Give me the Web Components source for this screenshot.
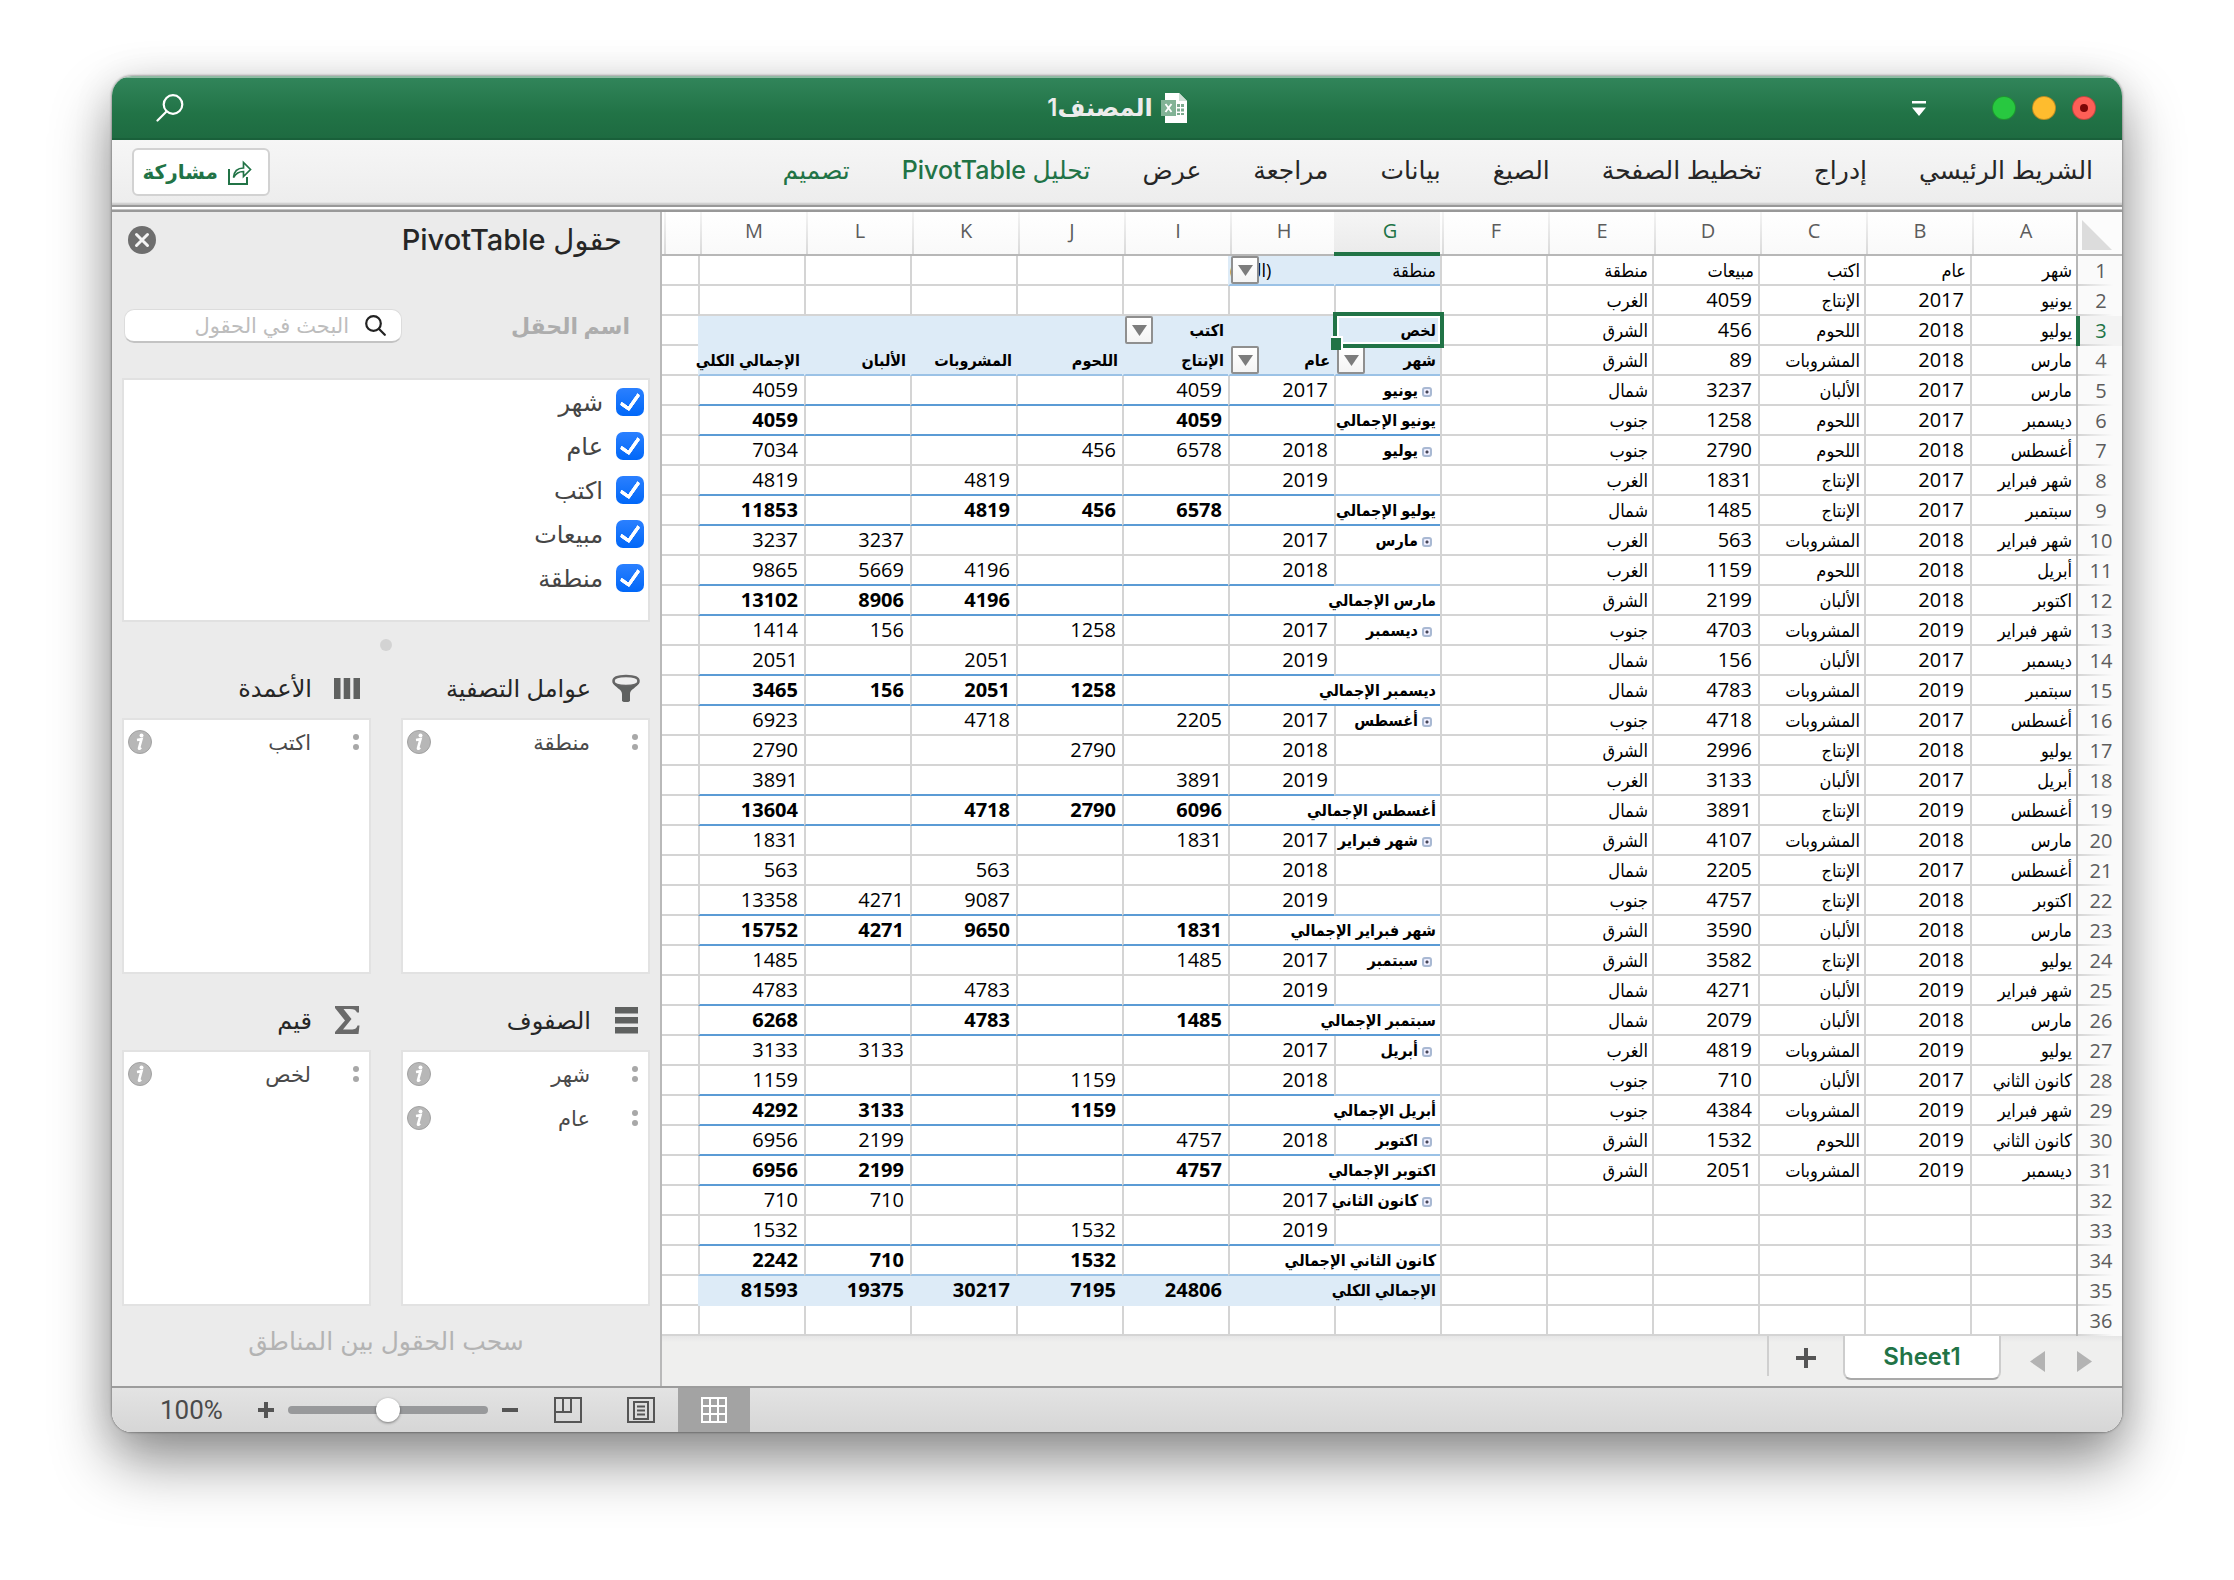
<!DOCTYPE html>
<html lang="ar" dir="rtl">
<head>
<meta charset="utf-8">
<title>المصنف1</title>
<style>
html{background:#fff}
body{margin:0;padding:76px 112px 148px;font-family:"Inter","DejaVu Sans",sans-serif;color:#262626;background:#fff}
</style>
</head>
<body>
<workbook-window>
  <title-bar slot="title">المصنف1</title-bar>
  <ribbon-bar slot="ribbon"></ribbon-bar>
  <sheet-grid slot="main"></sheet-grid>
  <sheet-tabs slot="main">Sheet1</sheet-tabs>
  <pivot-panel slot="side">
    <field-area slot="areas" icon="filter" label="عوامل التصفية" items="منطقة"></field-area>
    <field-area slot="areas" icon="columns" label="الأعمدة" items="اكتب"></field-area>
    <field-area slot="areas" icon="rows" label="الصفوف" items="شهر,عام"></field-area>
    <field-area slot="areas" icon="sigma" label="قيم" items="لخص"></field-area>
  </pivot-panel>
  <status-bar slot="status"></status-bar>
</workbook-window>
<script>
const define = (name, render) => customElements.define(name, class extends HTMLElement {
  connectedCallback() {
    if (this.shadowRoot) return;
    this.attachShadow({mode: 'open'}).innerHTML =
      '<style>:host,*{box-sizing:border-box}button{font:inherit;color:inherit;border:0;background:none;padding:0;margin:0}svg{display:block}</style>' + render(this);
  }
});

define('workbook-window', () => `
<style>
:host{display:block;border-radius:20px;box-shadow:0 0 2px 1px rgba(0,0,0,.28),0 30px 60px rgba(0,0,0,.42),0 6px 40px rgba(0,0,0,.12)}
.frame{border-radius:20px;overflow:hidden;background:#ebebeb}
.body{display:flex;align-items:stretch}
.main{flex:1;min-width:0}
.side{flex:0 0 550px;display:flex}
</style>
<div class="frame">
  <slot name="title"></slot><slot name="ribbon"></slot>
  <div class="body"><main class="main"><slot name="main"></slot></main><div class="side"><slot name="side"></slot></div></div>
  <slot name="status"></slot>
</div>`);

define('title-bar', () => `
<style>
:host{display:grid;grid-template-columns:1fr auto 1fr;align-items:center;height:64px;padding:0 26px;color:#ececec;
 background:linear-gradient(#31855a,#217346 60%,#1e6b41);border-top:2px solid #8fbba3;border-bottom:2px solid #19603a;font-size:24px;font-weight:600}
.lights{display:flex;gap:16px;align-items:center}
.l{width:24px;height:24px;border-radius:50%;border:1px solid rgba(0,0,0,.25);display:grid;place-items:center}
.r{background:#fe5f57}.y{background:#febc2e}.g{background:#28c840}
.r i{width:8px;height:8px;border-radius:50%;background:#7d0607}
.menu{margin-right:50px}
.name{display:flex;align-items:center;gap:8px;line-height:36px}
.find{justify-self:end;margin-left:18px}
</style>
<div class="lights"><button class="l r" aria-label="إغلاق"><i></i></button><button class="l y" aria-label="تصغير"></button><button class="l g" aria-label="تكبير"></button>
<button class="menu" aria-label="تخصيص"><svg width="14" height="15" viewBox="0 0 14 15" fill="#fff"><path d="M0 0h14v2.5H0zM0 6.5h14L7 15z"/></svg></button></div>
<div class="name"><svg width="26" height="30" viewBox="0 0 26 30"><path d="M4 0h14l8 8v22H4z" fill="#fff"/><path d="M18 0l8 8h-8z" fill="#cfe0d6"/><path d="M16 11h7v3h-7zM16 15.500h7v3h-7zM16 20h7v2h-7z" fill="#7dab90"/><path d="M19.500 10v13" stroke="#fff"/><path d="M0 7h15v16H0z" fill="#82b396"/><path d="M4.500 11l6 8M10.500 11l-6 8" stroke="#fff" stroke-width="1.800"/></svg><span><slot></slot></span></div>
<button class="find" aria-label="بحث"><svg width="28" height="28" viewBox="0 0 28 28" fill="none" stroke="#fff" stroke-width="2.200" stroke-linecap="round"><circle cx="17" cy="10.500" r="9.300"/><path d="M10.500 17.500L1.500 26.500"/></svg></button>`);

define('ribbon-bar', () => `
<style>
:host{display:flex;align-items:center;height:72px;padding:0 29px 8px 20px;background:linear-gradient(#f6f6f6,#ededed 62px,#c9c9c9 64px,#c9c9c9 65px,#999 65px,#999 67px,#fff 67px,#fff 69px,#c4c4c4 69px,#c4c4c4 70px,#999 70px,#999 72px)}
nav{display:flex;gap:52px;flex:1;font-size:25px;font-weight:500;line-height:36px;padding-bottom:4px}
a{color:#262626;text-decoration:none;white-space:nowrap}
a.on{color:#217346}
.share{display:flex;align-items:center;gap:10px;height:48px;width:138px;padding:0 16px 0 0;border:2px solid #d2d2d2;border-radius:6px;background:#fff;color:#217346;font-size:20px;font-weight:600}
</style>
<nav>${['الشريط الرئيسي','إدراج','تخطيط الصفحة','الصيغ','بيانات','مراجعة','عرض'].map(t=>`<a href="#">${t}</a>`).join('')}<a href="#" class="on">تحليل PivotTable</a><a href="#" class="on">تصميم</a></nav>
<button class="share"><svg width="24" height="25" viewBox="0 0 24 25" fill="none" stroke="#217346" stroke-width="2"><path d="M1 9v15h18v-7"/><path d="M5.500 17.500C6 11 10 8 15.500 8V2.500L22.500 9.500 15.500 16.500V11.500C11.500 11.500 8 13 5.500 17.500z" stroke-width="1.700"/></svg><span>مشاركة</span></button>`);

const SOURCE = `شهر|عام|اكتب|مبيعات|منطقة
يونيو|2017|الإنتاج|4059|الغرب
يوليو|2018|اللحوم|456|الشرق
مارس|2018|المشروبات|89|الشرق
مارس|2017|الألبان|3237|شمال
ديسمبر|2017|اللحوم|1258|جنوب
أغسطس|2018|اللحوم|2790|جنوب
شهر فبراير|2017|الإنتاج|1831|الغرب
سبتمبر|2017|الإنتاج|1485|شمال
شهر فبراير|2018|المشروبات|563|الغرب
أبريل|2018|اللحوم|1159|الغرب
اكتوبر|2018|الألبان|2199|الشرق
شهر فبراير|2019|المشروبات|4703|جنوب
ديسمبر|2017|الألبان|156|شمال
سبتمبر|2019|المشروبات|4783|شمال
أغسطس|2017|المشروبات|4718|جنوب
يوليو|2018|الإنتاج|2996|الشرق
أبريل|2017|الألبان|3133|الغرب
أغسطس|2019|الإنتاج|3891|شمال
مارس|2018|المشروبات|4107|الشرق
أغسطس|2017|الإنتاج|2205|شمال
اكتوبر|2018|الإنتاج|4757|جنوب
مارس|2018|الألبان|3590|الشرق
يوليو|2018|الإنتاج|3582|الشرق
شهر فبراير|2019|الألبان|4271|شمال
مارس|2018|الألبان|2079|شمال
يوليو|2019|المشروبات|4819|الغرب
كانون الثاني|2017|الألبان|710|جنوب
شهر فبراير|2019|المشروبات|4384|جنوب
كانون الثاني|2019|اللحوم|1532|الشرق
ديسمبر|2019|المشروبات|2051|الشرق`.split('\n').map(r => r.split('|'));

/* kind | G | H | I | J | K | L | M ; kinds: p page filter, h/k header rows, i group item, d detail, t subtotal, g grand total */
const PIVOT = `p|منطقة|(الكل)|||||
n|||||||
h|لخص||اكتب||||
k|شهر|عام|الإنتاج|اللحوم|المشروبات|الألبان|الإجمالي الكلي
i|يونيو|2017|4059||||4059
t|يونيو الإجمالي||4059||||4059
i|يوليو|2018|6578|456|||7034
d||2019|||4819||4819
t|يوليو الإجمالي||6578|456|4819||11853
i|مارس|2017||||3237|3237
d||2018|||4196|5669|9865
t|مارس الإجمالي||||4196|8906|13102
i|ديسمبر|2017||1258||156|1414
d||2019|||2051||2051
t|ديسمبر الإجمالي|||1258|2051|156|3465
i|أغسطس|2017|2205||4718||6923
d||2018||2790|||2790
d||2019|3891||||3891
t|أغسطس الإجمالي||6096|2790|4718||13604
i|شهر فبراير|2017|1831||||1831
d||2018|||563||563
d||2019|||9087|4271|13358
t|شهر فبراير الإجمالي||1831||9650|4271|15752
i|سبتمبر|2017|1485||||1485
d||2019|||4783||4783
t|سبتمبر الإجمالي||1485||4783||6268
i|أبريل|2017||||3133|3133
d||2018||1159|||1159
t|أبريل الإجمالي|||1159||3133|4292
i|اكتوبر|2018|4757|||2199|6956
t|اكتوبر الإجمالي||4757|||2199|6956
i|كانون الثاني|2017||||710|710
d||2019||1532|||1532
t|كانون الثاني الإجمالي|||1532||710|2242
g|الإجمالي الكلي||24806|7195|30217|19375|81593
n|||||||`.split('\n').map(r => r.split('|'));

const arrow = '<button class="dd" aria-label="تصفية"><svg width="15" height="11" viewBox="0 0 15 11"><path d="M0 0h15L7.500 11z" fill="#7c7c7c"/></svg></button>';

function gridRow(n) {
  const src = SOURCE[n - 1] || [], p = PIVOT[n - 1], kind = p[0];
  const next = PIVOT[n] ? PIVOT[n][0] : 'n';
  let h = `<tr${n === 3 ? ' class="cur"' : ''}><th scope="row">${n}</th>`;
  for (let c = 0; c < 6; c++) { const v = src[c] || ''; h += `<td${/^\d/.test(v) ? ' class="n"' : ''}>${v}</td>`; }
  const wide = kind === 't' && n > 9 || kind === 'g';
  for (let c = 1; c <= 7; c++) {
    if (wide && c === 2) continue;
    const v = p[c], cls = [];
    if (/^\d/.test(v)) cls.push('n');
    if ('hktg'.includes(kind) || kind === 'i' && c === 1) cls.push('b');
    if ('hkg'.includes(kind) || kind === 'p' && c < 3) cls.push('f');
    if (kind === 'k' || kind === 'p' && c < 3 || next === 'g') cls.push('lt');
    else if (kind === 't') cls.push('st');
    else if (next === 't') cls.push(c === 1 ? 'lt' : 'st');
    let inner = v;
    if (kind === 'i' && c === 1) inner = `<button class="ex" aria-label="طي"></button>${v}`;
    if (kind === 'p' && c === 2) { cls.push('l'); inner += arrow; }
    if (kind === 'h' && c === 3 || kind === 'k' && c < 3) inner += arrow;
    if (kind === 'h' && c === 1) { cls.push('sel'); inner += '<span class="ring"><i></i></span>'; }
    h += `<td class="${cls.join(' ')}"${wide && c === 1 ? ' colspan="2"' : ''}>${inner}</td>`;
  }
  return h + '<td></td></tr>';
}

define('sheet-grid', () => `
<style>
:host{display:block;background:#fff;font-family:"Open Sans","DejaVu Sans Condensed","DejaVu Sans",sans-serif;color:#000}
table{width:100%;table-layout:fixed;border-collapse:separate;border-spacing:0;font-size:20px}
col.r{width:46px}col.c{width:106px}
thead th{height:44px;padding:0 0 4px;line-height:28px;font-weight:400;color:#5c5c5c;border-bottom:2px solid #b7b7b7;
 background:linear-gradient(#f4f4f4,#d9d9d9) 2px 0/2px 100% no-repeat,linear-gradient(#fff,#f9f9f9);text-align:center;text-indent:-6px}
thead th.cur{color:#217346;border-bottom:4px solid #217346;padding-bottom:2px;background:linear-gradient(#f5f5f5,#ebebeb)}
thead th.corner{border-left:2px solid #bdbdbd;background:#fcfcfc;padding:0;text-indent:0}
.corner svg{margin:4px 10px 0 0}
tbody th{height:30px;padding:0 0 0 2px;line-height:28px;font-weight:400;color:#5c5c5c;border-left:2px solid #b7b7b7;
 background:linear-gradient(to left,#fff0 20%,#d4d4d4) 0 100%/100% 2px no-repeat,#fafafa}
tr.cur th{color:#217346;border-left:4px solid #217346;background-color:#f3f3f3;padding-left:0}
td{position:relative;height:30px;padding:0 4px 0 0;line-height:28px;white-space:nowrap;text-align:right;border-left:2px solid #d4d4d4;border-bottom:2px solid #d4d4d4;font-size:18px}
td:last-child{border-left:0}
td.b{font-weight:700;font-size:16px}
td.n{font-size:20px;direction:ltr;text-align:right}
td.f{background:#ddebf7;border-color:#ddebf7}
td.lt{border-bottom-color:#9bc2e6}
td.st{border-bottom-color:#5b9bd5}
td.l{text-align:left}
.dd{position:absolute;left:1px;top:0;width:28px;height:28px;display:grid;place-items:center;border:2px solid #8f8f8f;border-radius:2px;background:linear-gradient(#fff,#f4f4f4)}
.ring{position:absolute;top:-4px;right:-4px;bottom:-4px;left:-3px;border:4px solid #217346;box-shadow:inset 0 0 0 2px #fff;z-index:2}
.ring i{position:absolute;left:-6px;bottom:-6px;width:12px;height:14px;background:#217346;border-top:2px solid #fff;border-right:2px solid #fff}
.ex{display:inline-block;width:10px;height:10px;margin:0 4px 0 4px;border:2px solid #a9b9d3;border-radius:3px;background:radial-gradient(#445 1px,#eef 2px);vertical-align:middle}
</style>
<table>
<colgroup><col class="r">${'<col class="c">'.repeat(13)}<col></colgroup>
<thead><tr><th class="corner"><svg width="30" height="30" viewBox="0 0 30 30"><path d="M0 30V0l30 30z" fill="#dcdcdc"/></svg></th>${[...'ABCDEFGHIJKLM'].map(c => `<th scope="col"${c === 'G' ? ' class="cur"' : ''}>${c}</th>`).join('')}<th></th></tr></thead>
<tbody>${PIVOT.map((_, i) => gridRow(i + 1)).join('')}</tbody>
</table>`);

define('sheet-tabs', () => `
<style>
:host{display:flex;align-items:flex-start;height:50px;padding-right:30px;background:linear-gradient(#e6e6e6,#efefee 6px,#efefee)}
.nav{display:flex;gap:32px;padding-top:15px;width:91px}
.tab{width:158px;height:44px;background:#fff;border:2px solid #cdcdcd;border-top:0;border-bottom-color:#a9a9a9;border-radius:0 0 8px 8px;color:#217346;font-size:24px;font-weight:600;line-height:40px}
.add{width:76px;height:40px;display:grid;place-items:center;border-left:2px solid #cfcfcf;padding-top:4px}
</style>
<div class="nav"><button aria-label="السابق"><svg width="15" height="21" viewBox="0 0 15 21"><path d="M0 0l15 10.500L0 21z" fill="#b3b3b3"/></svg></button><button aria-label="التالي"><svg width="15" height="21" viewBox="0 0 15 21"><path d="M15 0v21L0 10.500z" fill="#b3b3b3"/></svg></button></div>
<button class="tab"><slot></slot></button>
<button class="add" aria-label="ورقة جديدة"><svg width="20" height="20" viewBox="0 0 20 20"><path d="M10 0v20M0 10h20" stroke="#555" stroke-width="4"/></svg></button>`);

define('pivot-panel', () => `
<style>
:host{display:flex;flex-direction:column;flex:1;background:#ebebeb;border-right:2px solid #b9b9b9;padding:6px 10px 0 10px}
header{display:flex;justify-content:space-between;align-items:center;height:44px;padding:0 28px 0 6px}
h2{margin:0;font-size:29px;font-weight:500;line-height:44px}
.search{display:flex;justify-content:space-between;align-items:center;margin-top:46px;height:36px;padding:0 20px 0 2px}
.search label{font-size:22px;font-weight:600;color:#adadad}
.box{display:flex;align-items:center;gap:16px;width:278px;height:34px;padding:0 15px;background:#fff;border-radius:10px;border:1px solid #dcdcdc;border-bottom:2px solid #c3c3c3}
input[type=search]{flex:1;min-width:0;border:0;outline:0;background:none;font:inherit;font-size:21px;padding:0}
input::placeholder{color:#bdbdbd;opacity:1}
.fields{margin-top:34px;height:244px;border:2px solid #e1e1e1;background:#fff;padding:8px 4px}
.fields label{display:flex;align-items:center;gap:13px;height:28px;margin-bottom:16px;font-size:24px;color:#454545}
input[type=checkbox]{appearance:none;width:28px;height:28px;margin:0;border-radius:7px;background:linear-gradient(#2b80ff,#0067f8);display:grid;place-items:center}
input[type=checkbox]:checked::before{content:"";width:8px;height:16px;border:solid #fff;border-width:0 4px 4px 0;border-radius:2px;transform:translateY(-2px) rotate(35deg)}
.handle{width:12px;height:12px;border-radius:50%;background:#d3d3d3;margin:17px auto 19px}
.areas{display:grid;grid-template-columns:1fr 1fr;gap:28px 30px}
p{margin:17px 0 0;text-align:center;font-size:25px;line-height:36px;color:#b3b3b3}
</style>
<header><h2>حقول PivotTable</h2><button aria-label="إغلاق"><svg width="28" height="28" viewBox="0 0 28 28"><circle cx="14" cy="14" r="14" fill="#6e6e6e"/><path d="M8.500 8.500l11 11M19.500 8.500l-11 11" stroke="#f4f4f4" stroke-width="3" stroke-linecap="round"/></svg></button></header>
<div class="search"><label for="q">اسم الحقل</label><div class="box"><svg width="21" height="21" viewBox="0 0 21 21" fill="none" stroke="#222" stroke-width="2.200" stroke-linecap="round"><circle cx="8.500" cy="8.500" r="7.300"/><path d="M14 14l5.800 5.800"/></svg><input id="q" type="search" placeholder="البحث في الحقول"></div></div>
<div class="fields">${['شهر','عام','اكتب','مبيعات','منطقة'].map(f => `<label><input type="checkbox" checked>${f}</label>`).join('')}</div>
<div class="handle"></div>
<div class="areas"><slot name="areas"></slot></div>
<p>سحب الحقول بين المناطق</p>`);

const ICONS = {
  filter: '<path d="M14 2C22 2 26.500 4 26.500 7S22 12 14 12 1.500 10 1.500 7 6 2 14 2z" fill="#eee" stroke="#666" stroke-width="2.500"/><path d="M.5 8C3 14 10 15 10 20v7q4 3 8 0v-7c0-5 7-6 9.500-12C24 14 4 14 .5 8z" fill="#5f6160"/>',
  columns: '<path d="M1 4h6.500v21H1zM10.700 4h6.500v21h-6.500zM20.500 4H27v21h-6.500z" fill="#5f6160"/>',
  rows: '<path d="M3 1h23v6.500H3zM3 11h23v6.500H3zM3 21h23v6.500H3z" fill="#5f6160"/>',
  sigma: '<path d="M2 0h24v6.500h-2C23 4 21 3 17 3H10.500l8 10L10 23.500h8c4 0 5.500-1 6.500-4H26.500l-1 8.500H2v-2l10-11.500L2 2z" fill="#6a6a6a"/>'
};
define('field-area', el => `
<style>
:host{display:block}
h3{display:flex;align-items:center;gap:21px;height:48px;margin:0;padding:0 10px 12px 0;font-size:24px;font-weight:500;color:#262626}
ul{list-style:none;margin:0;height:256px;padding:0 8px 0 4px;border:2px solid #e2e2e2;background:#fff}
li{display:flex;align-items:center;height:44px;font-size:21px;color:#4a4a4a}
.grip{display:grid;gap:4px;margin:0 2px 0 42px;width:6px}
.grip i{width:6px;height:6px;border-radius:50%;background:#a8a8a8}
button{margin-right:auto}
</style>
<h3><svg width="28" height="28" viewBox="0 0 28 28">${ICONS[el.getAttribute('icon')]}</svg>${el.getAttribute('label')}</h3>
<ul>${el.getAttribute('items').split(',').map(t => `<li><span class="grip"><i></i><i></i></span>${t}<button aria-label="معلومات"><svg width="24" height="24" viewBox="0 0 24 24"><circle cx="12" cy="12" r="11.500" fill="#b7b7b7" stroke="#a2a2a2"/><circle cx="13.500" cy="5.500" r="2" fill="#fff"/><path d="M9 10l4.500-.8-2.500 9c-.2 1 .7.600 2-.7" fill="none" stroke="#fff" stroke-width="2.600"/></svg></button></li>`).join('')}</ul>`);

define('status-bar', () => `
<style>
:host{display:flex;justify-content:flex-end;align-items:center;height:46px;padding-left:48px;background:linear-gradient(#e3e3e3,#d6d6d6);border-top:2px solid #9c9c9c}
.v{height:44px;width:72px;display:grid;place-items:center}
.v.on{background:#a3a3a3;margin-left:23px}
.page{margin-left:45px;width:28px}.brk{margin-left:36px;width:28px}
input{appearance:none;width:200px;height:8px;margin:0 14px;border-radius:4px;background:#98999b}
input::-webkit-slider-thumb{appearance:none;width:24px;height:24px;border-radius:50%;background:#fff;box-shadow:0 1px 3px rgba(0,0,0,.45)}
output{margin-right:35px;min-width:63px;font-size:26px;color:#4a4a4a;font-family:Roboto,sans-serif;direction:ltr}
</style>
<button class="v on" aria-label="عادي"><svg width="28" height="28" viewBox="0 0 28 28" fill="none" stroke="#fff" stroke-width="2"><path d="M2 2h24v24H2zM10 2v24M18 2v24M2 10h24M2 18h24"/></svg></button>
<button class="v page" aria-label="تخطيط الصفحة"><svg width="28" height="28" viewBox="0 0 28 28" fill="none" stroke="#555" stroke-width="2"><path d="M1 2h26v24H1zM7 6h14v17H7zM10 10.500h8M10 14.500h8M10 18.500h8"/></svg></button>
<button class="v brk" aria-label="فواصل الصفحات"><svg width="28" height="28" viewBox="0 0 28 28" fill="none" stroke="#555" stroke-width="2"><path d="M1 2h26v24H1zM1 16h16V2M9 2v14"/></svg></button>
<button aria-label="تصغير"><svg width="16" height="16" viewBox="0 0 16 16"><path d="M0 8h16" stroke="#555" stroke-width="4"/></svg></button>
<input type="range" aria-label="تكبير/تصغير" value="50">
<button aria-label="تكبير"><svg width="16" height="16" viewBox="0 0 16 16"><path d="M8 0v16M0 8h16" stroke="#555" stroke-width="4"/></svg></button>
<output>100%</output>`);
</script>
</body>
</html>
